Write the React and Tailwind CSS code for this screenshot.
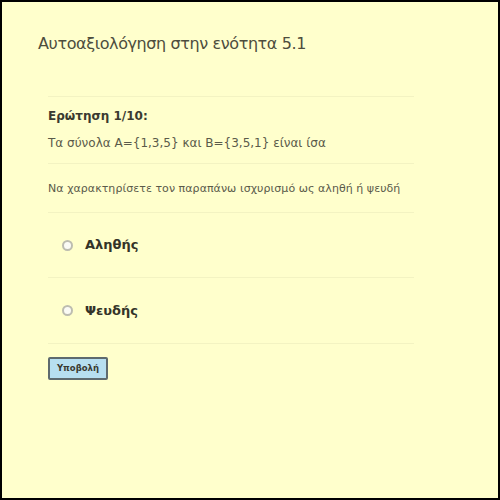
export default function App() {
  const font = { fontFamily: '"DejaVu Sans", Verdana, sans-serif' };
  return (
    <div className="w-[500px] h-[500px] bg-[#ffffcc] border-2 border-black box-border overflow-hidden" style={font}>
      <div className="pl-[36px] pt-[30px]">
        <h1 className="text-[16px] leading-[24px] text-[#4d4d3d] m-0 tracking-[-0.4px]">Αυτοαξιολόγηση στην ενότητα 5.1</h1>
      </div>
      <div className="ml-[46px] w-[366px] mt-[40px]">
        <div className="border-t border-[#f3f3c2] pt-[10px] pb-[11px]">
          <div className="text-[12px] leading-[18px] font-bold text-[#3a3a30]">Ερώτηση 1/10:</div>
          <div className="text-[12px] leading-[18px] text-[#5a5a4a] mt-[9px]">Τα σύνολα A={"{"}1,3,5{"}"} και B={"{"}3,5,1{"}"} είναι ίσα</div>
        </div>
        <div className="border-t border-[#f3f3c2] pt-[17px] pb-[15px]">
          <div className="text-[11px] leading-[16px] text-[#5a5a4a] tracking-[0.05px] whitespace-nowrap">Να χαρακτηρίσετε τον παραπάνω ισχυρισμό ως αληθή ή ψευδή</div>
        </div>
        <div className="border-t border-[#f3f3c2] h-[65px] flex items-center pl-[14px]">
          <span className="w-[11px] h-[11px] rounded-full border-2 border-[#bdbdb0] bg-[#fbfbf5] box-border"></span>
          <span className="ml-[12px] text-[13px] font-bold text-[#333328]">Αληθής</span>
        </div>
        <div className="border-t border-[#f3f3c2] h-[66px] flex items-center pl-[14px]">
          <span className="w-[11px] h-[11px] rounded-full border-2 border-[#bdbdb0] bg-[#fbfbf5] box-border"></span>
          <span className="ml-[12px] text-[13px] font-bold text-[#333328]">Ψευδής</span>
        </div>
        <div className="border-t border-[#f3f3c2] pt-[10px]">
          <button className="w-[60px] h-[23px] bg-[#b7dff0] border-2 border-[#5e6a6e] rounded-[2px] text-[8.5px] font-bold text-[#3a3a30] p-0" style={font}>Υποβολή</button>
        </div>
      </div>
    </div>
  );
}
